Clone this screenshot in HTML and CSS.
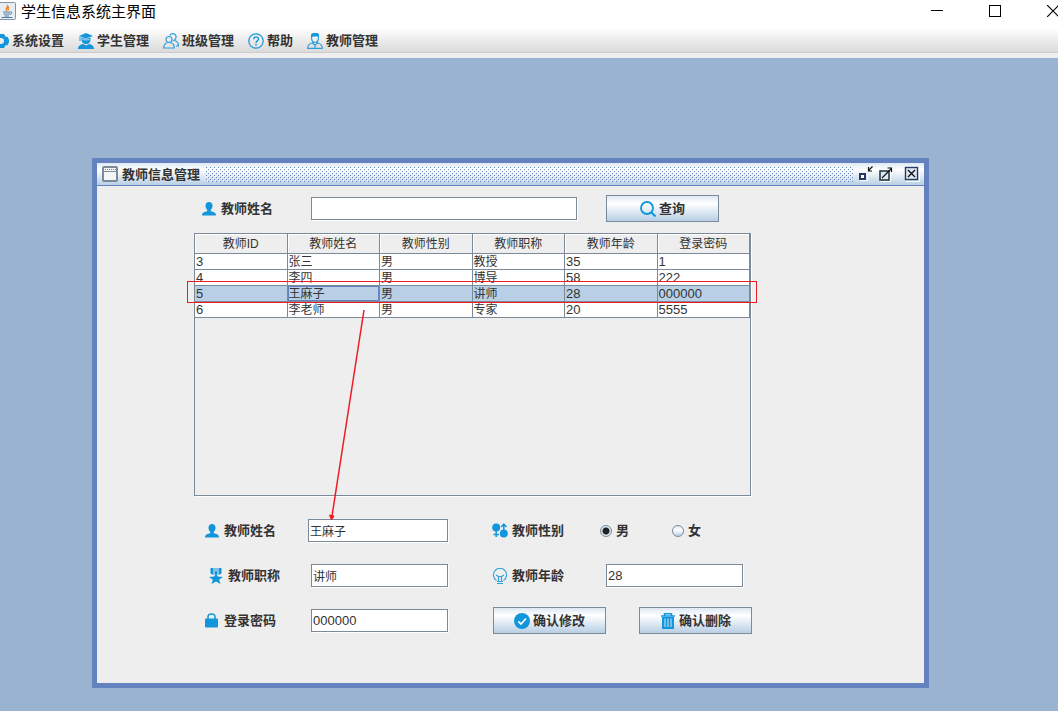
FILE: index.html
```html
<!DOCTYPE html>
<html lang="zh-CN">
<head>
<meta charset="utf-8">
<title>学生信息系统主界面</title>
<link rel="stylesheet" href="styles.css">
</head>
<body>
<header class="titlebar">
  <svg class="app-icon" viewBox="0 0 18 18"><rect x=".5" y=".5" width="17" height="17" rx="1" fill="#e6edf3" stroke="#8393a3"/><path d="M9 3c3 2-3 3 0 6M11 5c-2 1.500-1 2 0 3" fill="none" stroke="#f08020" stroke-width="1.400"/><path d="M5 10h7M5.500 12h6.500M6.500 14h4.500M3.500 15.500h11" fill="none" stroke="#4f7fa5" stroke-width="1.200"/><path d="M12 10c3-.5 2 2 0 2.500" fill="none" stroke="#4f7fa5"/></svg>
  <h1 class="app-title">学生信息系统主界面</h1>
  <div class="window-controls">
    <button class="icon-button" aria-label="最小化"><svg width="12" height="12"><path d="M0 5.500h12" stroke="#000"/></svg></button>
    <button class="icon-button" aria-label="最大化"><svg width="12" height="12"><rect x=".5" y=".5" width="11" height="11" fill="none" stroke="#000"/></svg></button>
    <button class="icon-button" aria-label="关闭"><svg width="12" height="12"><path d="M0 0l12 12M12 0L0 12" stroke="#000" stroke-width="1.200"/></svg></button>
  </div>
</header>

<nav class="menubar">
  <button class="menu"><svg class="menu-icon" viewBox="0 0 16 16"><path fill-rule="evenodd" fill="#1296db" d="M4.500 1H11l1.500 2.700h2l1.500 3v2.600l-1.500 3h-2L11 15H4.500L2 12 0 8l2-4zM8 5a3 3 0 100 6 3 3 0 000-6z"/></svg>系统设置</button>
  <button class="menu"><svg class="menu-icon" viewBox="0 0 16 16"><g fill="#1296db"><path d="M1 3l7-3 7 3-7 2.500z"/><path d="M3.500 4.500L8 6l4.500-1.500v2C12.500 9 11 11 8 11S3.500 9 3.500 6.500z"/><path d="M0 16c0-3 2.500-4.500 5-5l3 1.500 3-1.500c2.500.5 5 2 5 5z"/></g><path d="M4.500 6.500Q8 7.500 11.500 6.500" stroke="#e9f5fc" stroke-width=".7" fill="none"/><path d="M2 3.500V8" stroke="#1296db"/></svg>学生管理</button>
  <button class="menu"><svg class="menu-icon" viewBox="0 0 16 16"><g fill="none" stroke="#2f9fdb" stroke-width="1.200"><circle cx="6" cy="6.500" r="3"/><path d="M.7 15c0-3.500 2-5.500 5.300-5.500s5.300 2 5.300 5.500z"/><path d="M7 2.500C8 0 12 0 13 3c.5 2-.5 3.500-2 4.500 3 .5 4.500 3 4.500 5.500H13"/></g></svg>班级管理</button>
  <button class="menu"><svg class="menu-icon" viewBox="0 0 16 16"><g fill="none" stroke="#1296db"><circle cx="8" cy="8" r="7.200" stroke-width="1.200"/><path d="M5.800 6.300c0-3.300 4.600-3 4.600-.3C10.400 8 8 7.800 8 10M8 11v1.500" stroke-width="1.400"/></g></svg>帮助</button>
  <button class="menu"><svg class="menu-icon" viewBox="0 0 16 16"><g fill="none" stroke="#2f9fdb" stroke-width="1.200"><path d="M4.500 4c0 3 1 5.500 3.500 5.500S11.500 7 11.500 4M5.500 8.500v1.500C2.500 10.500.7 12.500.7 15.300h14.600c0-2.800-1.800-4.800-4.800-5.300V8.500M5.500 10L8 12.500l2.500-2.500M8 12.500v2.500"/></g><path d="M4 5V2q0-2 3-2h3q2 0 2 2v3l-1-1.500H6z" fill="#1296db"/></svg>教师管理</button>
</nav>

<main class="desktop">
  <section class="frame">
    <div class="frame-head">
      <svg class="frame-icon" width="16" height="16"><rect x="1" y="1" width="14" height="14" rx="1" fill="#f5f5f5" stroke="#7a8a99" stroke-width="2"/><path d="M2 5.500h12" stroke="#7a8a99"/><path d="M3 3.500h11" stroke="#6382bf" stroke-dasharray="1 1"/></svg>
      <h2 class="frame-title">教师信息管理</h2>
      <svg class="frame-grip"><defs><pattern id="bumps" width="4" height="4" patternUnits="userSpaceOnUse"><path d="M0 0h1v1H0zM2 2h1v1H2z" fill="#6382bf"/><path d="M1 1h1v1H1zM3 3h1v1H3z" fill="#fff"/></pattern></defs><rect width="100%" height="100%" fill="url(#bumps)"/></svg>
      <div class="frame-controls">
        <button class="icon-button" aria-label="最小化"><svg width="16" height="16"><path d="M2 14.500h7.500V8" stroke="#fff" fill="none"/><rect x="2" y="8" width="5" height="5" fill="#fff" stroke="#263a66" stroke-width="2"/><path d="M14.500 .5l-4 4M10.500 1v4H14" fill="none" stroke="#111" stroke-width="1.200"/></svg></button>
        <button class="icon-button" aria-label="最大化"><svg width="16" height="16"><rect x="2" y="5" width="9" height="9" fill="#dfe9f4" stroke="#263a46" stroke-width="1.600"/><path d="M2 15.500h10.500V6" stroke="#fff" fill="none"/><path d="M4 12l9-9M9.500 2h4v4" fill="none" stroke="#111" stroke-width="1.200"/></svg></button>
        <button class="icon-button close" aria-label="关闭"><svg width="16" height="16"><path d="M2 15.500h13.500V2" stroke="#fff" fill="none"/><rect x="1.500" y="1.500" width="12" height="12" fill="#dfe9f4" stroke="#263a66" stroke-width="1.400"/><path d="M4 4l7 7M11 4l-7 7" stroke="#111" stroke-width="1.400"/></svg></button>
      </div>
    </div>

    <div class="frame-body">
      <form class="search">
        <label class="label search-label" for="q"><svg class="label-icon" viewBox="0 0 16 16"><path fill="#1296db" d="M8 1c2.200 0 3.500 1.500 3.500 3.700 0 1.800-.8 3.200-1.700 4v1.500c2.700.6 5.200 1 5.200 4.300H1c0-3.300 2.500-3.700 5.200-4.300V8.700c-.9-.8-1.700-2.200-1.700-4C4.500 2.500 5.800 1 8 1z"/></svg>教师姓名</label>
        <input class="text search-text" id="q" type="text">
        <button class="button" type="button"><svg class="button-icon" viewBox="0 0 16 16"><circle cx="7" cy="7" r="6" fill="none" stroke="#1296db" stroke-width="1.800"/><path d="M11.300 11.300l4.200 4.200" stroke="#1296db" stroke-width="2"/></svg>查询</button>
      </form>

      <div class="table-pane">
        <table class="teachers">
          <thead><tr><th>教师ID</th><th>教师姓名</th><th>教师性别</th><th>教师职称</th><th>教师年龄</th><th>登录密码</th></tr></thead>
          <tbody>
            <tr><td class="num">3</td><td>张三</td><td>男</td><td>教授</td><td class="num">35</td><td class="num">1</td></tr>
            <tr><td class="num">4</td><td>李四</td><td>男</td><td>博导</td><td class="num">58</td><td class="num">222</td></tr>
            <tr class="selected"><td class="num">5</td><td class="focused">王麻子</td><td>男</td><td>讲师</td><td class="num">28</td><td class="num">000000</td></tr>
            <tr><td class="num">6</td><td>李老师</td><td>男</td><td>专家</td><td class="num">20</td><td class="num">5555</td></tr>
          </tbody>
        </table>
      </div>

      <form class="details">
        <div class="pair">
          <label class="label" for="name"><svg class="label-icon" viewBox="0 0 16 16"><path fill="#1296db" d="M8 1c2.200 0 3.500 1.500 3.500 3.700 0 1.800-.8 3.200-1.700 4v1.500c2.700.6 5.200 1 5.200 4.300H1c0-3.300 2.500-3.700 5.200-4.300V8.700c-.9-.8-1.700-2.200-1.700-4C4.500 2.500 5.800 1 8 1z"/></svg>教师姓名</label>
          <input class="text text-wide" id="name" type="text" value="王麻子">
        </div>
        <div class="pair" role="radiogroup" aria-labelledby="gender">
          <span class="label gender-label" id="gender"><svg class="label-icon" viewBox="0 0 16 16"><g fill="#1296db"><circle cx="4.200" cy="4.500" r="4"/><circle cx="11.800" cy="10.500" r="4"/></g><path d="M4.200 8v6M1.500 11.500h5.500M11.800 8V1.500M9.200 4l2.600-2.800L14.400 4" fill="none" stroke="#1296db" stroke-width="1.500"/></svg>教师性别</span>
          <label class="choice"><input class="radio" type="radio" name="g" checked>男</label>
          <label class="choice"><input class="radio" type="radio" name="g">女</label>
        </div>
        <div class="pair">
          <label class="label rank-label" for="rank"><svg class="label-icon" viewBox="0 0 16 16"><path fill="#1296db" d="M2.500 0h3v7l-3-1.500zM10.500 0h3v5.500l-3 1.500zM6.500 0h1v3.500h1V0h1v6.500h-3zM8 5l1.700 3.500 5.300.5-3.900 2.800 1.400 4.200L8 13.600 3.500 16l1.400-4.200L1 9l5.300-.5z"/></svg>教师职称</label>
          <input class="text" id="rank" type="text" value="讲师">
        </div>
        <div class="pair">
          <label class="label age-label" for="age"><svg class="label-icon" viewBox="0 0 16 16"><g fill="none" stroke="#2f9fdb"><path d="M4.500 12.500a6.600 6.600 0 117 0M6.500 14V8.500h3V14M4 7l2.500 1.500M12 7L9.500 8.500M5 13.500h6M5 15.500h6" stroke-width="1.100"/></g></svg>教师年龄</label>
          <input class="text num" id="age" type="text" value="28">
        </div>
        <div class="pair">
          <label class="label" for="pwd"><svg class="label-icon" viewBox="0 0 16 16"><path d="M4 7V4C4 0 11 0 11 4v3" fill="none" stroke="#1296db" stroke-width="1.500"/><rect x="1" y="5.500" width="13" height="9" rx="1" fill="#1296db"/></svg>登录密码</label>
          <input class="text num" id="pwd" type="text" value="000000">
        </div>
        <div class="pair actions">
          <button class="button" type="button"><svg class="button-icon" viewBox="0 0 16 16"><circle cx="8" cy="8" r="8" fill="#1296db"/><path d="M4.300 8.300l2.700 2.700 5-5.500" fill="none" stroke="#fff" stroke-width="1.700"/></svg>确认修改</button>
          <button class="button" type="button"><svg class="button-icon" viewBox="0 0 16 16"><path d="M1 3h14M4.500 3V.8h7V3" fill="none" stroke="#1296db" stroke-width="1.500"/><path d="M2 4h12v12H2z" fill="#1296db"/><path d="M5 5.500V14M8 5.500V14M11 5.500V14" stroke="#d5e7f5"/></svg>确认删除</button>
        </div>
      </form>
    </div>
    <svg class="callout" width="572" height="242" aria-hidden="true"><g fill="none" stroke="#ed1c24"><rect x=".5" y=".5" width="569" height="21"/><path d="M177 29L145 235" stroke-width="1.500"/></g><path d="M144.500 239l-2-5 4.500 1z" fill="#ed1c24" stroke="#ed1c24"/></svg>
  </section>
</main>
</body>
</html>
```
FILE: styles.css
```css
* { box-sizing: border-box; }

body {
  margin: 0;
  height: 100vh;
  display: flex;
  flex-direction: column;
  overflow: hidden;
  background: #eee;
  color: #333;
  font: 12px/16px "Liberation Sans", "Noto Sans CJK SC", sans-serif;
}

svg { display: block; flex: none; }
button, input { font: inherit; color: inherit; }

.icon-button { padding: 0; border: 0; background: none; }

.titlebar {
  display: flex;
  align-items: center;
  height: 28px;
  padding-bottom: 6px;
  background: #fff;
}
.app-icon { width: 18px; height: 18px; margin-left: -2px; }
.app-title { margin: 0 0 0 5px; padding-top: 2px; font-size: 15px; font-weight: 400; color: #000; }
.window-controls { display: flex; gap: 46px; margin-left: auto; margin-right: -1px; }

.menubar {
  display: flex;
  align-items: center;
  gap: 14px;
  height: 25px;
  margin-bottom: 5px;
  padding-top: 2px;
  border-bottom: 1px solid #ccc;
  background: linear-gradient(#fff, #dadada);
}
.menu {
  display: flex;
  align-items: center;
  gap: 3px;
  padding: 0;
  border: 0;
  background: none;
  font-size: 13px;
  font-weight: 700;
}
.menu:first-child { margin-left: -7px; }
.menu-icon { width: 16px; height: 16px; }

.desktop { position: relative; flex: 1; background: #9ab3d1; }

.frame {
  position: absolute;
  left: 92px;
  top: 100px;
  width: 837px;
  border: 5px solid #6382bf;
  border-radius: 1px;
  background: #eee;
}
.frame-head {
  display: flex;
  align-items: center;
  height: 23px;
  padding: 0 4px 0 5px;
  border-bottom: 1px solid #6382bf;
  background: linear-gradient(#dde8f3, #fff 30%, #b8cfe5);
}
.frame-title { margin: 0 6px 0 4px; padding-top: 2px; font-size: 13px; font-weight: 700; }
.frame-grip { flex: 1; width: 0; height: 15px; shape-rendering: crispEdges; }
.frame-controls { display: flex; gap: 4px; margin-left: 5px; }
.frame-controls .close { margin-left: 6px; }

.frame-body { padding: 9px 97px 49px; }

.label { display: flex; align-items: center; gap: 4px; font-size: 13px; font-weight: 700; white-space: nowrap; }
.label-icon { width: 16px; height: 16px; }

.text {
  width: 137px;
  height: 23px;
  padding: 0 1px;
  border: 1px solid #7a8a99;
  border-radius: 0;
  background: #fff;
  box-shadow: 1px 1px #fff;
}
.text-wide { width: 140px; }
.num { font-size: 13px; }

.button {
  display: flex;
  align-items: center;
  justify-content: center;
  gap: 3px;
  width: 113px;
  height: 27px;
  padding: 0;
  border: 1px solid #7a8a99;
  background: linear-gradient(#dde8f3, #fff 30%, #b8cfe5);
  font-size: 13px;
  font-weight: 700;
}
.button-icon { width: 16px; height: 16px; }

.search { display: flex; align-items: center; padding-left: 7px; }
.search-label { width: 110px; }
.search-text { width: 266px; margin-right: 29px; }

.table-pane {
  width: 557px;
  height: 263px;
  margin-top: 11px;
  border: 1px solid #7a8a99;
  box-shadow: 1px 1px #fff;
}
.teachers { width: 100%; table-layout: fixed; border-collapse: separate; border-spacing: 0; }
.teachers th {
  height: 20px;
  padding: 2px 0 0;
  border-right: 1px solid #7a8a99;
  border-bottom: 1px solid #7a8a99;
  box-shadow: inset 1px 1px #fff;
  font-weight: 400;
  line-height: 17px;
}
.teachers td {
  height: 16px;
  padding: 1px 0 0 1px;
  border-right: 1px solid #7a8a99;
  border-bottom: 1px solid #7a8a99;
  background: #fff;
  line-height: 14px;
  vertical-align: top;
}
.teachers .num { padding-top: 0; line-height: 15px; }
.teachers .selected td { background: #b8cfe5; }
.teachers .focused { box-shadow: inset 0 0 0 1px #6382bf; }

.details {
  display: grid;
  grid-template-columns: 243px 259px;
  gap: 18px 45px;
  margin-top: 21px;
  padding-left: 11px;
}
.pair { display: flex; align-items: center; height: 27px; }
.pair > .text { margin-left: auto; }
.pair > .label { margin-left: -1px; }
.rank-label { padding-left: 4px; }
.gender-label { width: 108px; }
.age-label { width: 114px; }
.pair > .age-label + .text { margin-left: 0; }
.actions { justify-content: space-between; }

.choice { display: flex; align-items: center; gap: 4px; width: 72px; font-size: 13px; font-weight: 700; }
.radio {
  appearance: none;
  width: 12px;
  height: 12px;
  margin: 0;
  border: 1px solid #7a8a99;
  border-radius: 50%;
  background: linear-gradient(#dde8f3, #fff 40%, #b8cfe5);
}
.radio:checked { background: radial-gradient(#222 3px, #dfe9f4 4px); }

/* Red marker drawn over the table and form */
.callout { position: absolute; left: 90px; top: 118px; pointer-events: none; }
```
